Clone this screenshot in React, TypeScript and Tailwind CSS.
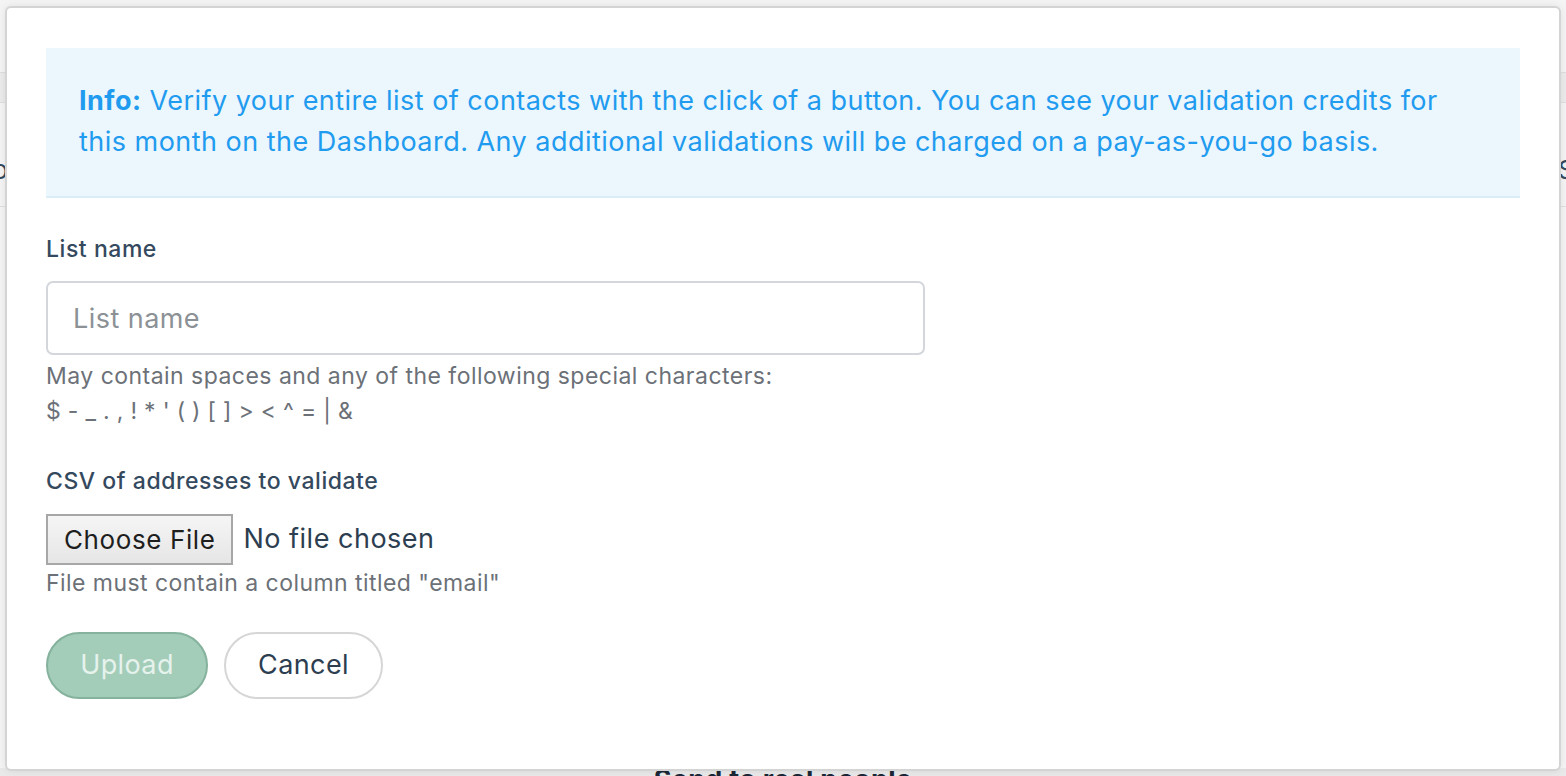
import React from "react";

const specials = "$ - _ . , ! * ' ( ) [ ] > < ^ = | &";

const Backdrop = () => {
  return (
    <div className="flex h-full w-full flex-col bg-[#f4f4f4]">
      <div className="h-[72px]" />
      <div className="h-[31px] border-y border-[#dedede] bg-[#ebebeb]" />
      <div className="flex h-[104px] items-center justify-between border-b border-[#dedede] pt-[30px] text-[26px] text-[#34495e]">
        <div className="flex w-[8px] justify-end whitespace-nowrap">Info</div>
        <div className="w-[8px] whitespace-nowrap">Status</div>
      </div>
      <div className="flex-1" />
      <div className="flex h-[8px] items-start justify-center overflow-visible bg-[#e9e9e9]">
        <p className="-mt-[4px] whitespace-nowrap text-[27px] font-bold leading-[32px] tracking-[0.3px] text-[#1b2736]">Send to real people</p>
      </div>
    </div>
  );
};

const UploadModal = () => {
  return (
    <div className="absolute left-[5px] top-[6px] z-10 flex h-[765px] w-[1556px] flex-col rounded-[6px] border-2 border-[#d4d4d4] bg-white px-[39px] pt-[40px] shadow-[0_0_8px_rgba(0,0,0,0.08)]">
      {/* info box */}
      <div className="border-b-2 border-[#dcedfa] bg-[#ebf6fd] px-[33px] pb-[34px] pt-[32px] text-[27px] leading-[41px] tracking-[0.47px] text-[#1f9bef]">
        <strong className="font-bold">Info:</strong> Verify your entire list of contacts with the click of a button. You can see your
        validation credits for
        <br />
        this month on the Dashboard. Any additional validations will be charged on a pay-as-you-go basis.
      </div>

      <form className="mt-[36px] flex flex-col" onSubmit={(e) => e.preventDefault()}>
        <label className="text-[23px] font-medium leading-[30px] tracking-[0.55px] text-[#34495e]">List name</label>
        <input
          type="text"
          placeholder="List name"
          className="mt-[17px] h-[74px] w-[879px] rounded-[7px] border-2 border-[#d3d7db] px-[25px] text-[27px] tracking-[0.45px] text-[#2c3e50] outline-none placeholder:text-[#8c9196]"
        />
        <p className="mt-[4px] text-[23px] leading-[35px] tracking-[0.47px] text-[#6c7178]">
          May contain spaces and any of the following special characters:
        </p>
        <p className="text-[23px] leading-[35px] tracking-[0.3px] text-[#6c7178]">{specials}</p>

        <label className="mt-[37px] text-[23px] font-medium leading-[30px] tracking-[0.55px] text-[#34495e]">
          CSV of addresses to validate
        </label>
        <div className="mt-[18px] flex items-center">
          <button
            type="button"
            className="h-[51px] border-2 border-[#a7a7a7] bg-gradient-to-b from-[#f5f5f5] to-[#e6e6e6] px-[16px] text-[26px] tracking-[0.6px] text-[#1e1e1e]"
          >
            Choose File
          </button>
          <span className="ml-[10px] text-[27px] tracking-[0.5px] text-[#2c3e50]">No file chosen</span>
        </div>
        <p className="mt-[1px] text-[23px] leading-[34px] tracking-[0.45px] text-[#6c7178]">File must contain a column titled "email"</p>

        <div className="mt-[32px] flex gap-[16px]">
          <button
            type="submit"
            disabled
            className="h-[67px] w-[162px] rounded-full border-2 border-[#85b29d] bg-[#a3cdb9] text-[27px] tracking-[0.4px] text-[#e6f2ec]"
          >
            Upload
          </button>
          <button
            type="button"
            className="h-[67px] w-[159px] rounded-full border-2 border-[#d6d6d6] bg-white text-[27px] tracking-[0.4px] text-[#2c3e50]"
          >
            Cancel
          </button>
        </div>
      </form>
    </div>
  );
};

export default function App() {
  return (
    <div className="relative h-[776px] w-full overflow-hidden font-['Inter',sans-serif]">
      <Backdrop />
      <UploadModal />
    </div>
  );
}
